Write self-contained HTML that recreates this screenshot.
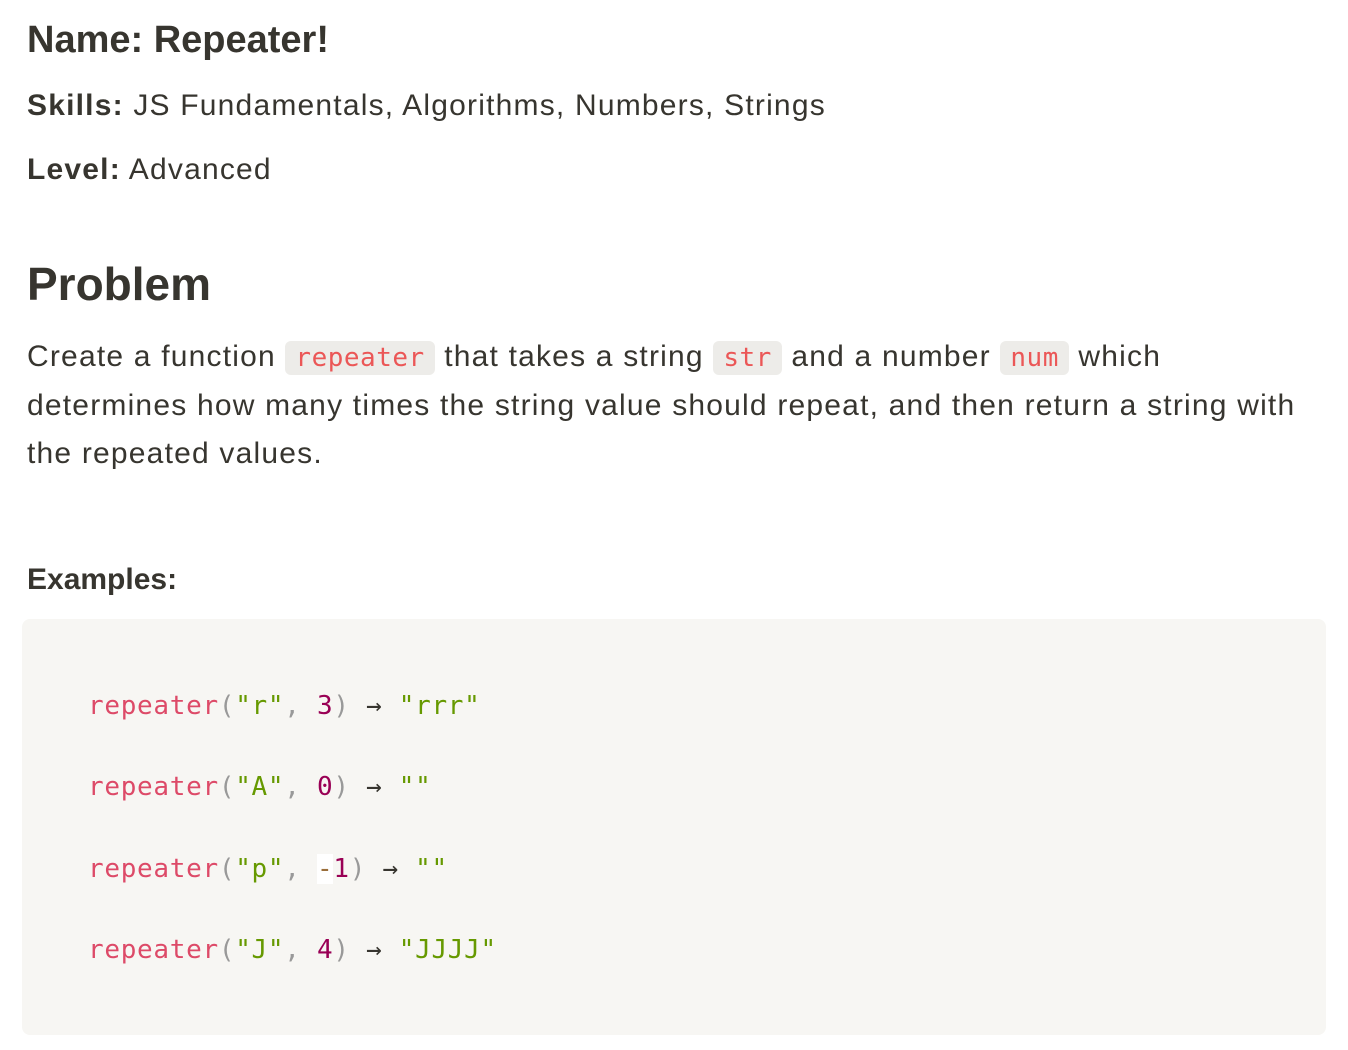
<!DOCTYPE html>
<html><head><meta charset="utf-8"><style>
body{margin:0;background:#fff;color:#37352f;font-family:"Liberation Sans",sans-serif;width:1348px;height:1050px;overflow:hidden;position:relative}
.a{position:absolute;left:27px;white-space:nowrap}
.t{font-size:30px;letter-spacing:1.2px}
b{font-weight:bold}
code{font-family:"DejaVu Sans Mono","Liberation Mono",monospace;color:#eb5757;background:#edece9;border-radius:6px;padding:2px 10px;font-size:26px;letter-spacing:0.5px}
.box{position:absolute;left:22px;top:619px;width:1304px;height:416px;background:#f7f6f3;border-radius:8px}
.c{position:absolute;left:88px;font-family:"DejaVu Sans Mono",monospace;font-size:26px;letter-spacing:0.7px;white-space:pre;color:#37352f}
.f{color:#dd4a68}.p{color:#999}.s{color:#669900}.n{color:#990055}.o{color:#9a6e3a}
</style></head><body>
<div class="a" style="top:19px;font-size:38px;font-weight:bold">Name: Repeater!</div>
<div class="a t" style="top:89px"><b>Skills:</b> JS Fundamentals, Algorithms, Numbers, Strings</div>
<div class="a t" style="top:153px"><b>Level:</b> Advanced</div>
<div class="a" style="top:257px;font-size:46px;font-weight:bold">Problem</div>
<div class="a t" style="top:333px;line-height:48px">Create a function <code>repeater</code> that takes a string <code>str</code> and a number <code>num</code> which<br>determines how many times the string value should repeat, and then return a string with<br>the repeated values.</div>
<div class="a" style="top:563px;font-size:30px;font-weight:bold">Examples:</div>
<div class="box"></div>
<div class="c" style="top:691px"><span class="f">repeater</span><span class="p">(</span><span class="s">"r"</span><span class="p">, </span><span class="n">3</span><span class="p">)</span> → <span class="s">"rrr"</span></div>
<div class="c" style="top:772px"><span class="f">repeater</span><span class="p">(</span><span class="s">"A"</span><span class="p">, </span><span class="n">0</span><span class="p">)</span> → <span class="s">""</span></div>
<div class="c" style="top:854px"><span class="f">repeater</span><span class="p">(</span><span class="s">"p"</span><span class="p">, </span><span class="o" style="background:#fff">-</span><span class="n">1</span><span class="p">)</span> → <span class="s">""</span></div>
<div class="c" style="top:935px"><span class="f">repeater</span><span class="p">(</span><span class="s">"J"</span><span class="p">, </span><span class="n">4</span><span class="p">)</span> → <span class="s">"JJJJ"</span></div>
</body></html>
